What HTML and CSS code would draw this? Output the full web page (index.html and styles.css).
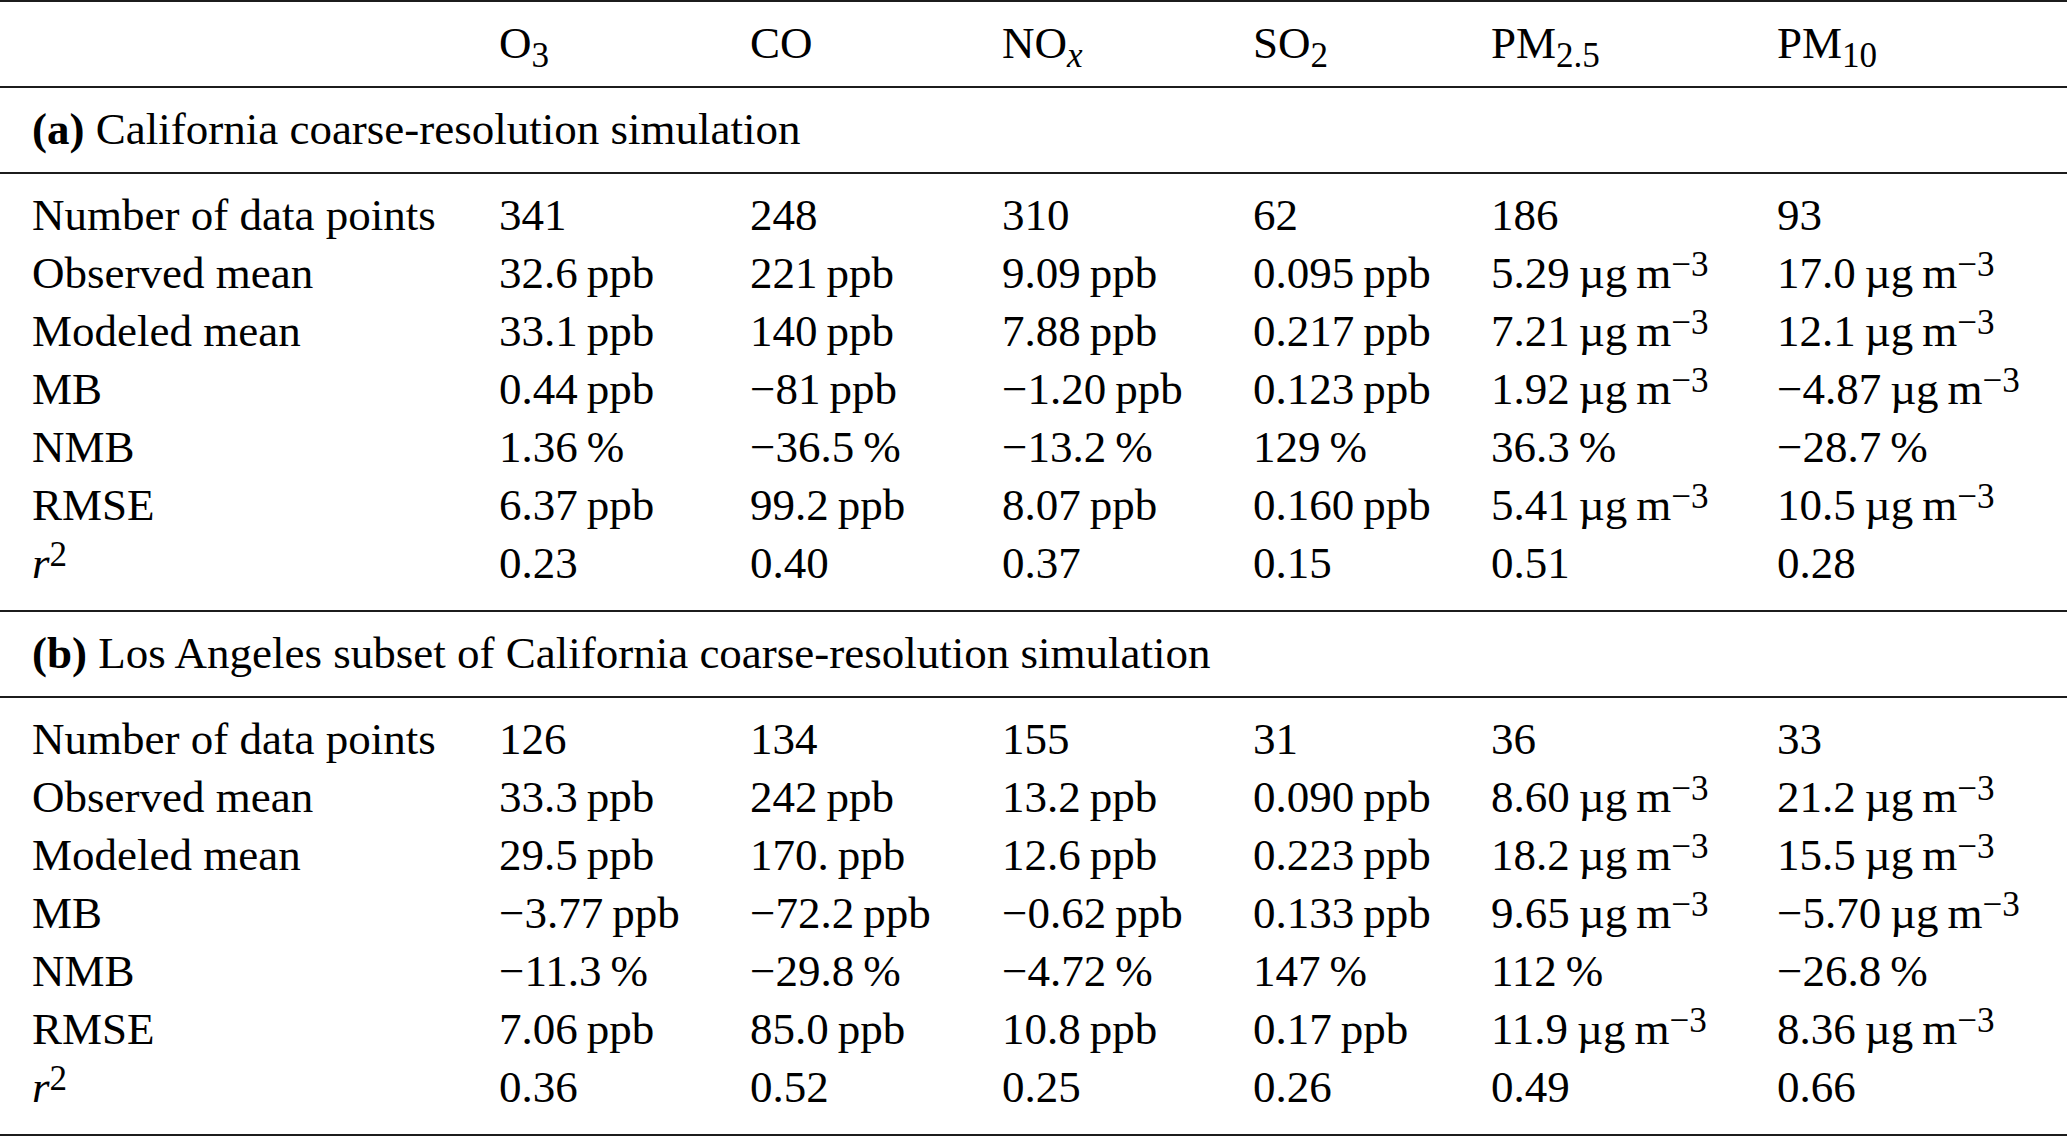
FILE: index.html
```html
<!DOCTYPE html>
<html lang="en">
<head>
<meta charset="utf-8">
<title>Model evaluation statistics</title>
<link rel="stylesheet" href="styles.css">
</head>
<body>
<div class="tbl">
  <div class="block head grid">
    <div></div>
    <div>O<sub>3</sub></div>
    <div>CO</div>
    <div>NO<sub><i>x</i></sub></div>
    <div>SO<sub>2</sub></div>
    <div>PM<sub>2.5</sub></div>
    <div>PM<sub>10</sub></div>
  </div>
  <div class="block sec"><b>(a)</b> California coarse-resolution simulation</div>
  <div class="block data grid">
    <div>Number of data points</div><div>341</div><div>248</div><div>310</div><div>62</div><div>186</div><div>93</div>
    <div>Observed mean</div><div>32.6&thinsp;ppb</div><div>221&thinsp;ppb</div><div>9.09&thinsp;ppb</div><div>0.095&thinsp;ppb</div><div>5.29&thinsp;µg&thinsp;m<sup>−3</sup></div><div>17.0&thinsp;µg&thinsp;m<sup>−3</sup></div>
    <div>Modeled mean</div><div>33.1&thinsp;ppb</div><div>140&thinsp;ppb</div><div>7.88&thinsp;ppb</div><div>0.217&thinsp;ppb</div><div>7.21&thinsp;µg&thinsp;m<sup>−3</sup></div><div>12.1&thinsp;µg&thinsp;m<sup>−3</sup></div>
    <div>MB</div><div>0.44&thinsp;ppb</div><div>−81&thinsp;ppb</div><div>−1.20&thinsp;ppb</div><div>0.123&thinsp;ppb</div><div>1.92&thinsp;µg&thinsp;m<sup>−3</sup></div><div>−4.87&thinsp;µg&thinsp;m<sup>−3</sup></div>
    <div>NMB</div><div>1.36&thinsp;%</div><div>−36.5&thinsp;%</div><div>−13.2&thinsp;%</div><div>129&thinsp;%</div><div>36.3&thinsp;%</div><div>−28.7&thinsp;%</div>
    <div>RMSE</div><div>6.37&thinsp;ppb</div><div>99.2&thinsp;ppb</div><div>8.07&thinsp;ppb</div><div>0.160&thinsp;ppb</div><div>5.41&thinsp;µg&thinsp;m<sup>−3</sup></div><div>10.5&thinsp;µg&thinsp;m<sup>−3</sup></div>
    <div><i>r</i><sup>2</sup></div><div>0.23</div><div>0.40</div><div>0.37</div><div>0.15</div><div>0.51</div><div>0.28</div>
  </div>
  <div class="block sec"><b>(b)</b> Los Angeles subset of California coarse-resolution simulation</div>
  <div class="block data grid">
    <div>Number of data points</div><div>126</div><div>134</div><div>155</div><div>31</div><div>36</div><div>33</div>
    <div>Observed mean</div><div>33.3&thinsp;ppb</div><div>242&thinsp;ppb</div><div>13.2&thinsp;ppb</div><div>0.090&thinsp;ppb</div><div>8.60&thinsp;µg&thinsp;m<sup>−3</sup></div><div>21.2&thinsp;µg&thinsp;m<sup>−3</sup></div>
    <div>Modeled mean</div><div>29.5&thinsp;ppb</div><div>170.&thinsp;ppb</div><div>12.6&thinsp;ppb</div><div>0.223&thinsp;ppb</div><div>18.2&thinsp;µg&thinsp;m<sup>−3</sup></div><div>15.5&thinsp;µg&thinsp;m<sup>−3</sup></div>
    <div>MB</div><div>−3.77&thinsp;ppb</div><div>−72.2&thinsp;ppb</div><div>−0.62&thinsp;ppb</div><div>0.133&thinsp;ppb</div><div>9.65&thinsp;µg&thinsp;m<sup>−3</sup></div><div>−5.70&thinsp;µg&thinsp;m<sup>−3</sup></div>
    <div>NMB</div><div>−11.3&thinsp;%</div><div>−29.8&thinsp;%</div><div>−4.72&thinsp;%</div><div>147&thinsp;%</div><div>112&thinsp;%</div><div>−26.8&thinsp;%</div>
    <div>RMSE</div><div>7.06&thinsp;ppb</div><div>85.0&thinsp;ppb</div><div>10.8&thinsp;ppb</div><div>0.17&thinsp;ppb</div><div>11.9&thinsp;µg&thinsp;m<sup>−3</sup></div><div>8.36&thinsp;µg&thinsp;m<sup>−3</sup></div>
    <div><i>r</i><sup>2</sup></div><div>0.36</div><div>0.52</div><div>0.25</div><div>0.26</div><div>0.49</div><div>0.66</div>
  </div>
</div>
</body>
</html>
```
FILE: styles.css
```css
html, body {
  margin: 0;
  padding: 0;
  background: #fff;
}
body {
  font-family: "Liberation Serif", "Times New Roman", serif;
  font-size: 45px;
  line-height: 58px;
  color: #000;
}
.tbl {
  width: 2067px;
  border-top: 2px solid #1c1c1c;
  border-bottom: 2px solid #1c1c1c;
}
.block {
  padding: 12px 0 14px 32px;
  border-bottom: 2px solid #1c1c1c;
  white-space: nowrap;
}
.block:last-child {
  border-bottom: none;
}
.data {
  padding-bottom: 18px;
}
.grid {
  display: grid;
  grid-template-columns: 467px 251px 252px 251px 238px 286px auto;
}
sub, sup {
  font-size: 0.78em;
  line-height: 0;
}
sub {
  vertical-align: -0.27em;
}
sup {
  vertical-align: 0.34em;
}
b {
  font-weight: bold;
}
i {
  font-style: italic;
}
```
